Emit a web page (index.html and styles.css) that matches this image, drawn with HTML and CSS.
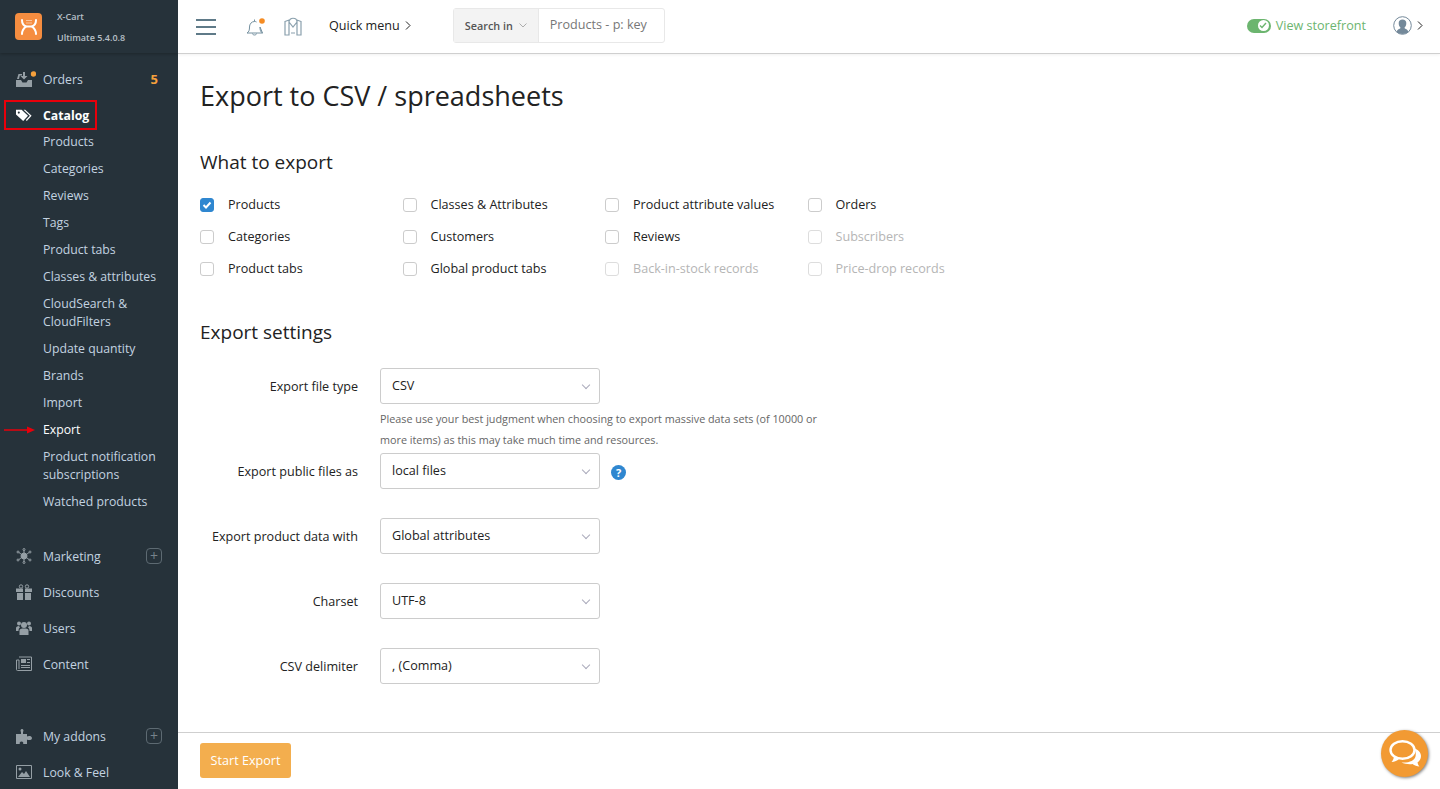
FILE: index.html
```html
<!DOCTYPE html>
<html lang="en">
<head>
  <meta charset="UTF-8">
  <title>Export to CSV / spreadsheets</title>
  <link rel="stylesheet" href="styles.css">
</head>
<body>

<aside class="sidebar">
  <div class="brand">
    <div class="brand-logo">
      <svg width="20" height="20" viewBox="0 0 20 20" fill="none" stroke="#fff" stroke-width="2" stroke-linecap="round">
        <path d="M3 3c0 3 1.500 5.500 4 6.500h6c2.500-1 4-3.500 4-6.500"/>
        <path d="M3 17c0-3 1.500-5.500 4-7.500M17 17c0-3-1.500-5.500-4-7.500"/>
        <path d="M7.500 3.500h5M7.500 6h5" stroke-width="1" stroke-dasharray="1 1" stroke-linecap="butt"/>
      </svg>
    </div>
    <div class="brand-text">
      <div>X-Cart</div>
      <div>Ultimate 5.4.0.8</div>
    </div>
  </div>

  <nav class="nav">
    <a class="nav-item">
      <svg class="nav-icon nav-icon-wide" viewBox="0 0 20 16" fill="#959fa5"><path d="M0 9h5l1.500 2.500h4L12 9h4v7H0z"/><path d="M1 8l1.500-5H6v1.500H3.800L3 8z"/><path d="M7 1h2v4h2.500L8 8.500 4.500 5H7z"/><circle cx="17.500" cy="3" r="2.700" fill="#f5a03c"/></svg>
      <span>Orders</span>
      <b class="nav-count">5</b>
    </a>
    <a class="nav-item is-active">
      <svg class="nav-icon" viewBox="0 0 20 16" fill="#fff"><path d="M0 1.500h7l8 7.500-6 6.500-9-8z"/><path d="M9.500 1.500h2l8 7.500-6 6.500-1.200-1.200 5-5.300z"/><circle cx="3.500" cy="5" r="1.300" fill="#26323a"/></svg>
      <span>Catalog</span>
    </a>
    <ul class="subnav">
      <li>Products</li>
      <li>Categories</li>
      <li>Reviews</li>
      <li>Tags</li>
      <li>Product tabs</li>
      <li>Classes &amp; attributes</li>
      <li>CloudSearch &amp;<br>CloudFilters</li>
      <li>Update quantity</li>
      <li>Brands</li>
      <li>Import</li>
      <li class="is-current">Export</li>
      <li>Product notification<br>subscriptions</li>
      <li>Watched products</li>
    </ul>

    <a class="nav-item nav-gap">
      <svg class="nav-icon" viewBox="0 0 16 16" fill="#959fa5" stroke="#959fa5" stroke-width="1"><circle cx="8" cy="8" r="3"/><path d="M8 5V2M8 11v3M5.500 6.500 3 4.500M10.500 6.500l2.500-2M5.500 9.500 3 11.500M10.500 9.500l2.500 2" fill="none"/><circle cx="8" cy="1.500" r="1" fill="none"/><circle cx="8" cy="14.500" r="1" fill="none"/><circle cx="2" cy="4" r="1" fill="none"/><circle cx="14" cy="4" r="1" fill="none"/><circle cx="2" cy="12" r="1" fill="none"/><circle cx="14" cy="12" r="1" fill="none"/></svg>
      <span>Marketing</span>
      <i class="nav-plus">+</i>
    </a>
    <a class="nav-item">
      <svg class="nav-icon" viewBox="0 0 16 16" fill="#959fa5"><path d="M0 4.500h7V8H0zM9 4.500h7V8H9zM1 9h6v7H1zM9 9h6v7H9z"/><circle cx="5" cy="2.500" r="1.700" fill="none" stroke="#959fa5"/><circle cx="11" cy="2.500" r="1.700" fill="none" stroke="#959fa5"/></svg>
      <span>Discounts</span>
    </a>
    <a class="nav-item">
      <svg class="nav-icon" viewBox="0 0 16 16" fill="#959fa5"><circle cx="8" cy="5" r="3"/><circle cx="3" cy="3.500" r="2"/><circle cx="13" cy="3.500" r="2"/><path d="M3.500 15V10.500C3.500 9 5 8.500 8 8.500s4.500.5 4.500 2V15z"/><path d="M0 11V8c0-1 1-2 3-2l1 1.500C3 8 2.500 9 2.500 11zM16 11V8c0-1-1-2-3-2l-1 1.500c1 .5 1.500 1.500 1.500 3.500z"/></svg>
      <span>Users</span>
    </a>
    <a class="nav-item">
      <svg class="nav-icon" viewBox="0 0 16 16" fill="#959fa5"><path d="M3 1h12.500v13.500H1.500C.5 14.500.5 14 .5 13V4H3v9" fill="none" stroke="#959fa5"/><path d="M5 3h5v4H5zM11 3h3v1h-3zM11 6h3v1h-3zM5 9h9v1H5zM5 11h9v1H5z"/></svg>
      <span>Content</span>
    </a>

    <a class="nav-item nav-gap-lg">
      <svg class="nav-icon" viewBox="0 0 16 16" fill="#959fa5"><path d="M0 6h5V4c-1-1-.5-3 1-3s2 2 1 3v2h4v2.500c1-1 5-1 5 1.500s-4 2.500-5 1.500V16H7c1-1 0-2.500-1.500-2.500S3 15 4 16H0z"/></svg>
      <span>My addons</span>
      <i class="nav-plus">+</i>
    </a>
    <a class="nav-item">
      <svg class="nav-icon" viewBox="0 0 16 14" fill="#959fa5"><path d="M.5.500h15v13H.5z" fill="none" stroke="#959fa5"/><circle cx="4" cy="4" r="1.500"/><path d="M2 12l4-5 2 2 2-3 4 6z"/></svg>
      <span>Look &amp; Feel</span>
    </a>
  </nav>

  <div class="mark-box"></div>
  <svg class="mark-arrow" width="32" height="10" viewBox="0 0 32 10"><path d="M0 5h24" stroke="#e8000b" stroke-width="1.500"/><path d="M23 1.500 31 5l-8 3.500z" fill="#e8000b"/></svg>
</aside>

<div class="page">
  <header class="topbar">
    <div class="burger"><span></span><span></span><span></span></div>
    <svg class="top-bell" width="20" height="20" viewBox="0 0 20 20" fill="none" stroke="#74909f" stroke-width="1"><path d="M1 16c2-1 2.500-3 2.500-6 0-3 2-5.500 5-5.500 1 0 1.500.2 2 .5M14 10c0 3 .5 5 2.500 6zM1 16h15.500M6.500 16.500c0 2 4 2 4 0M8.500 4.500V2.500"/><circle cx="16" cy="4" r="2.800" fill="#f58c23" stroke="none"/></svg>
    <svg class="top-store" width="20" height="20" viewBox="0 0 20 20" fill="none" stroke="#8aa0ad" stroke-width="1.200"><path d="M2 4.500 6 3v15H2zM18 4.500 14 3v15h4zM6 5l4 5 4-5M6 5c0-5 8-5 8 0M8 16h4"/></svg>
    <div class="quick-menu">Quick menu <svg width="6" height="9" viewBox="0 0 6 9" fill="none" stroke="#222" stroke-width="1"><path d="M1 .5l4 4-4 4"/></svg></div>
    <div class="search">
      <div class="search-in">Search in <svg width="8" height="5" viewBox="0 0 8 5" fill="none" stroke="#999" stroke-width=".8"><path d="M.5.500 4 4 7.500.5"/></svg></div>
      <div class="search-value">Products - p: key</div>
    </div>
    <div class="storefront">
      <span class="toggle"><span class="toggle-knob"><svg width="8" height="7" viewBox="0 0 8 7" fill="none" stroke="#6cb56f" stroke-width="1.400"><path d="M1 3.500l2 2 4-4.500"/></svg></span></span>
      <span>View storefront</span>
    </div>
    <svg class="avatar" width="19" height="19" viewBox="0 0 19 19"><circle cx="9.500" cy="9.500" r="8.800" fill="#fff" stroke="#74899a" stroke-width="1"/><path d="M3.500 16c1-3 3-3 4.200-4-1.500-1.500-2-3-2-5 0-2 1.500-3.500 3.800-3.500S13.300 5 13.300 7c0 2-.5 3.500-2 5 1.200 1 3.200 1 4.200 4-3 2.500-9 2.500-12 0z" fill="#74899a"/></svg>
    <svg class="avatar-arrow" width="6" height="9" viewBox="0 0 6 9" fill="none" stroke="#222" stroke-width="1"><path d="M1 .5l4 4-4 4"/></svg>
  </header>

  <main class="content">
    <h1>Export to CSV / spreadsheets</h1>

    <h2 class="h-what">What to export</h2>
    <div class="check-grid">
      <label class="check"><span class="box is-checked"><svg width="10" height="8" viewBox="0 0 10 8" fill="none" stroke="#fff" stroke-width="2"><path d="M1.500 4l2.500 2.500L8.500 1.500"/></svg></span>Products</label>
      <label class="check"><span class="box"></span>Classes &amp; Attributes</label>
      <label class="check"><span class="box"></span>Product attribute values</label>
      <label class="check"><span class="box"></span>Orders</label>
      <label class="check"><span class="box"></span>Categories</label>
      <label class="check"><span class="box"></span>Customers</label>
      <label class="check"><span class="box"></span>Reviews</label>
      <label class="check is-disabled"><span class="box"></span>Subscribers</label>
      <label class="check"><span class="box"></span>Product tabs</label>
      <label class="check"><span class="box"></span>Global product tabs</label>
      <label class="check is-disabled"><span class="box"></span>Back-in-stock records</label>
      <label class="check is-disabled"><span class="box"></span>Price-drop records</label>
    </div>

    <h2 class="h-settings">Export settings</h2>
    <div class="form-row">
      <div class="form-label">Export file type</div>
      <div class="select">CSV</div>
    </div>
    <p class="form-help">Please use your best judgment when choosing to export massive data sets (of 10000 or more items) as this may take much time and resources.</p>
    <div class="form-row form-row-tight">
      <div class="form-label">Export public files as</div>
      <div class="select">local files</div>
      <span class="help-icon">?</span>
    </div>
    <div class="form-row">
      <div class="form-label">Export product data with</div>
      <div class="select">Global attributes</div>
    </div>
    <div class="form-row">
      <div class="form-label">Charset</div>
      <div class="select">UTF-8</div>
    </div>
    <div class="form-row">
      <div class="form-label">CSV delimiter</div>
      <div class="select">, (Comma)</div>
    </div>
  </main>

  <footer class="footer">
    <button class="btn-export">Start Export</button>
  </footer>
</div>

<div class="chat">
  <svg width="34" height="30" viewBox="0 0 34 30">
    <path d="M26 9c4 1.500 7 4.500 7 8 0 3-1.500 5-3.500 6.500.3 1.500 1 3 2 4-2.500 0-5-1-7-2.500-3 .5-8 0-11-1.500 8 .5 13-2 14-6 .7-3 0-6-1.500-8.500z" fill="#fff"/>
    <ellipse cx="14.500" cy="11" rx="12" ry="8.800" fill="none" stroke="#fff" stroke-width="2.400"/>
    <path d="M6 17c0 2-1 4.500-2.500 6 3 0 6-1.500 8-3.500z" fill="#fff"/>
  </svg>
</div>

</body>
</html>
```

FILE: styles.css
```css
* {
  box-sizing: border-box;
}
html, body {
  margin: 0;
  padding: 0;
  height: 100%;
  overflow: hidden;
}
body {
  display: flex;
  font-family: "Open Sans", Arial, sans-serif;
  font-size: 12.6px;
  color: #222;
  background-color: #fff;
}

/* sidebar */
.sidebar {
  position: relative;
  flex: 0 0 178px;
  height: 100vh;
  overflow: hidden;
  background-color: #26323a;
  color: #c3d3e0;
  font-size: 12.25px;
}
.brand {
  display: flex;
  align-items: center;
  height: 53px;
  padding-left: 15px;
  box-shadow: 0 1px 3px rgba(0,0,0,0.25);
}
.brand-logo {
  display: flex;
  align-items: center;
  justify-content: center;
  width: 27px;
  height: 27px;
  border-radius: 4px;
  background-color: #f58d40;
}
.brand-text {
  margin-left: 15px;
  font-size: 9px;
  font-weight: 600;
  line-height: 21px;
  color: #b7c0c7;
}
.nav {
  padding-top: 8px;
}
.nav-item {
  display: flex;
  align-items: center;
  height: 36px;
  padding-left: 16px;
  padding-right: 16px;
}
.nav-icon {
  flex: 0 0 16px;
  width: 16px;
  height: 16px;
  margin-right: 11px;
}
.nav-icon-wide {
  flex-basis: 20px;
  width: 20px;
  margin-right: 7px;
}
.nav-count {
  margin-left: auto;
  margin-right: 4px;
  font-size: 13px;
  color: #f5a03c;
}
.nav-plus {
  display: flex;
  align-items: center;
  justify-content: center;
  width: 16px;
  height: 16px;
  margin-left: auto;
  border: 1px solid #5d6a72;
  border-radius: 4px;
  font-style: normal;
  font-size: 14px;
  line-height: 1;
  color: #76838b;
}
.is-active {
  font-weight: 700;
  color: #fff;
}
.subnav {
  list-style: none;
  margin: -4px 0 0;
  padding: 0 0 0 43px;
}
.subnav li {
  padding: 4px 0 5px;
  line-height: 18px;
}
.subnav .is-current {
  color: #fff;
}
.nav-gap {
  margin-top: 22px;
}
.nav-gap-lg {
  margin-top: 36px;
}
.mark-box {
  position: absolute;
  left: 4px;
  top: 100px;
  width: 93px;
  height: 30px;
  border: 2px solid #e8000b;
}
.mark-arrow {
  position: absolute;
  left: 4px;
  top: 425px;
}

/* header */
.page {
  display: flex;
  flex-direction: column;
  flex: 1;
  min-width: 0;
  height: 100vh;
}
.topbar {
  display: flex;
  align-items: center;
  flex: 0 0 54px;
  padding-left: 18px;
  padding-right: 17px;
  border-bottom: 1px solid #cfcfcf;
  box-shadow: 0 1px 3px rgba(0,0,0,0.06);
}
.burger {
  display: flex;
  flex-direction: column;
  justify-content: space-between;
  width: 20px;
  height: 16px;
}
.burger span {
  height: 2px;
  background-color: #5f7a88;
}
.top-bell {
  margin-left: 30px;
}
.top-store {
  margin-left: 17px;
}
.quick-menu {
  display: flex;
  align-items: center;
  gap: 5px;
  margin-left: 26px;
  margin-top: -2px;
  color: #222;
}
.search {
  display: flex;
  height: 35px;
  margin-left: 42px;
  margin-top: -3px;
  border: 1px solid #e8e8e8;
  border-radius: 3px;
}
.search-in {
  display: flex;
  align-items: center;
  gap: 6px;
  width: 85px;
  padding-left: 11px;
  border-right: 1px solid #e8e8e8;
  background-color: #f3f3f3;
  font-size: 10.8px;
  font-weight: 600;
  color: #555;
}
.search-value {
  width: 125px;
  padding: 7px 0 0 11px;
  color: #777;
}
.storefront {
  display: flex;
  align-items: center;
  gap: 5px;
  margin-left: auto;
  margin-top: -2px;
  color: #6cb56f;
}
.toggle {
  display: flex;
  justify-content: flex-end;
  align-items: center;
  width: 24px;
  height: 14px;
  padding-right: 2px;
  border-radius: 7px;
  background-color: #6cb56f;
}
.toggle-knob {
  display: flex;
  align-items: center;
  justify-content: center;
  width: 11px;
  height: 11px;
  border-radius: 50%;
  background-color: #fff;
}
.avatar {
  margin-left: 27px;
  margin-top: -2px;
}
.avatar-arrow {
  margin-left: 5px;
  margin-top: -2px;
}

/* main form */
.content {
  flex: 1;
  min-height: 0;
  padding: 23px 22px 0;
}
h1 {
  margin: 0;
  font-size: 27px;
  font-weight: 400;
  line-height: 38px;
  color: #222;
}
h2 {
  margin: 0;
  font-size: 19px;
  font-weight: 400;
  line-height: 28px;
  color: #222;
}
.h-what {
  margin-top: 33px;
}
.h-settings {
  margin-top: 34px;
}
.check-grid {
  display: grid;
  grid-template-columns: repeat(4, 202.5px);
  grid-auto-rows: 32px;
  margin-top: 12px;
}
.check {
  display: flex;
  align-items: center;
}
.box {
  display: flex;
  align-items: center;
  justify-content: center;
  width: 14px;
  height: 14px;
  margin-top: 2px;
  margin-right: 14px;
  border: 1px solid #ccc;
  border-radius: 3px;
  background-color: #fff;
}
.box.is-checked {
  border-color: #2f87d0;
  background-color: #2f87d0;
}
.is-disabled {
  color: #b5b5b5;
}
.is-disabled .box {
  border-color: #ddd;
}
.form-row {
  display: flex;
  align-items: center;
  height: 36px;
  margin-top: 29px;
}
.h-settings + .form-row {
  margin-top: 22px;
}
.form-row-tight {
  margin-top: 3px;
}
.form-label {
  width: 158px;
  margin-right: 22px;
  text-align: right;
}
.select {
  position: relative;
  width: 220px;
  height: 36px;
  padding-left: 11px;
  border: 1px solid #ccc;
  border-radius: 3px;
  line-height: 34px;
}
.select::after {
  content: "";
  position: absolute;
  right: 10px;
  top: 13px;
  width: 5px;
  height: 5px;
  border-right: 1px solid #aab;
  border-bottom: 1px solid #aab;
  transform: rotate(45deg);
}
.form-help {
  width: 450px;
  margin: 4px 0 0 180px;
  font-size: 10.8px;
  line-height: 21px;
  color: #666;
}
.help-icon {
  display: flex;
  align-items: center;
  justify-content: center;
  width: 15px;
  height: 15px;
  margin-left: 11px;
  margin-top: 3px;
  border-radius: 50%;
  background-color: #2f87d0;
  color: #fff;
  font-size: 11px;
  font-weight: 700;
}

/* footer */
.footer {
  flex: 0 0 57px;
  padding: 10px 22px 0;
  border-top: 1px solid #cfcfcf;
}
.btn-export {
  width: 91px;
  height: 35px;
  padding: 0;
  border: none;
  border-radius: 3px;
  background-color: #f3ae4e;
  color: #fff;
  font-family: inherit;
  font-size: 12.6px;
}
.chat {
  position: absolute;
  right: 12px;
  bottom: 12px;
  display: flex;
  align-items: center;
  justify-content: center;
  width: 47px;
  height: 47px;
  border-radius: 50%;
  background-color: #f29a33;
  box-shadow: 1px 1px 3px rgba(0,0,0,0.5);
}
```
